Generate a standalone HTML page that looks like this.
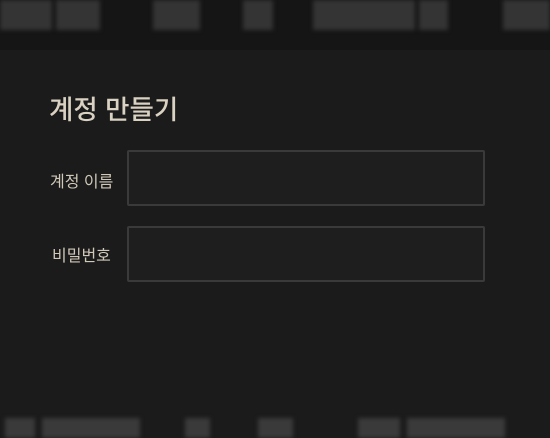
<!DOCTYPE html>
<html><head><meta charset="utf-8"><style>
body{margin:0;width:550px;height:435px;background:#1b1b1b;overflow:hidden;position:relative;font-family:"Liberation Sans","Noto Sans CJK KR",sans-serif}
.b{position:absolute;background:#343434;filter:blur(2px)}
.top{position:absolute;left:0;top:0;width:550px;height:50px;background:#151515}
h1{position:absolute;left:49px;top:88px;margin:0;font-size:26.5px;font-weight:500;color:#d9d1c1}
.l{position:absolute;color:#d0c8b8;font-size:16px}
.i{position:absolute;left:127px;width:354px;height:52px;border:2px solid #3a3a3a;border-radius:2px;background:#1e1e1e}
</style></head><body>
<div class="top"></div>
<div class="b" style="left:0;top:0;width:52px;height:30px"></div>
<div class="b" style="left:56px;top:0;width:44px;height:30px"></div>
<div class="b" style="left:153px;top:0;width:47px;height:30px"></div>
<div class="b" style="left:243px;top:0;width:30px;height:30px"></div>
<div class="b" style="left:313px;top:0;width:102px;height:30px"></div>
<div class="b" style="left:419px;top:0;width:29px;height:30px"></div>
<div class="b" style="left:503px;top:0;width:47px;height:30px"></div>
<div class="b" style="left:5px;top:418px;width:30px;height:20px;background:#3a3a3a"></div>
<div class="b" style="left:42px;top:418px;width:98px;height:20px;background:#3a3a3a"></div>
<div class="b" style="left:185px;top:418px;width:25px;height:20px;background:#3a3a3a"></div>
<div class="b" style="left:258px;top:418px;width:35px;height:20px;background:#3a3a3a"></div>
<div class="b" style="left:358px;top:418px;width:42px;height:20px;background:#3a3a3a"></div>
<div class="b" style="left:407px;top:418px;width:98px;height:20px;background:#3a3a3a"></div>
<h1>계정 만들기</h1>
<div class="l" style="left:50px;top:168px">계정 이름</div>
<div class="i" style="top:150px"></div>
<div class="l" style="left:52px;top:242px">비밀번호</div>
<div class="i" style="top:226px"></div>
</body></html>
